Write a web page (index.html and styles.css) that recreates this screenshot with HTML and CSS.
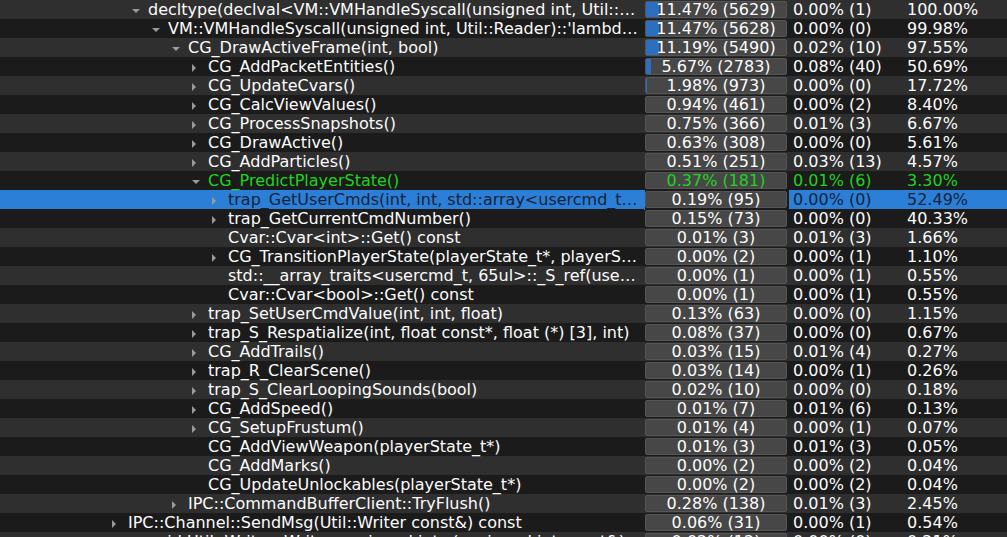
FILE: index.html
```html
<!DOCTYPE html>
<html>
<head>
<meta charset="utf-8">
<link rel="stylesheet" href="styles.css">
</head>
<body>
<div class="tree">
  <div class="row"><div class="name d1"><span class="arr down"></span>decltype(declval&lt;VM::VMHandleSyscall(unsigned int, Util::…</div><div class="barcol"><div class="bar" style="--w:14px">11.47% (5629)</div></div><div class="self">0.00% (1)</div><div class="incl">100.00%</div></div>
  <div class="row"><div class="name d2"><span class="arr down"></span>VM::VMHandleSyscall(unsigned int, Util::Reader)::'lambd…</div><div class="barcol"><div class="bar" style="--w:14px">11.47% (5628)</div></div><div class="self">0.00% (0)</div><div class="incl">99.98%</div></div>
  <div class="row"><div class="name d3"><span class="arr down"></span>CG_DrawActiveFrame(int, bool)</div><div class="barcol"><div class="bar" style="--w:14px">11.19% (5490)</div></div><div class="self">0.02% (10)</div><div class="incl">97.55%</div></div>
  <div class="row"><div class="name d4"><span class="arr right"></span>CG_AddPacketEntities()</div><div class="barcol"><div class="bar" style="--w:6px">5.67% (2783)</div></div><div class="self">0.08% (40)</div><div class="incl">50.69%</div></div>
  <div class="row"><div class="name d4"><span class="arr right"></span>CG_UpdateCvars()</div><div class="barcol"><div class="bar" style="--w:2px">1.98% (973)</div></div><div class="self">0.00% (0)</div><div class="incl">17.72%</div></div>
  <div class="row"><div class="name d4"><span class="arr right"></span>CG_CalcViewValues()</div><div class="barcol"><div class="bar" style="--w:1px">0.94% (461)</div></div><div class="self">0.00% (2)</div><div class="incl">8.40%</div></div>
  <div class="row"><div class="name d4"><span class="arr right"></span>CG_ProcessSnapshots()</div><div class="barcol"><div class="bar" style="--w:1px">0.75% (366)</div></div><div class="self">0.01% (3)</div><div class="incl">6.67%</div></div>
  <div class="row"><div class="name d4"><span class="arr right"></span>CG_DrawActive()</div><div class="barcol"><div class="bar" style="--w:1px">0.63% (308)</div></div><div class="self">0.00% (0)</div><div class="incl">5.61%</div></div>
  <div class="row"><div class="name d4"><span class="arr right"></span>CG_AddParticles()</div><div class="barcol"><div class="bar" style="--w:1px">0.51% (251)</div></div><div class="self">0.03% (13)</div><div class="incl">4.57%</div></div>
  <div class="row hot"><div class="name d4"><span class="arr down"></span>CG_PredictPlayerState()</div><div class="barcol"><div class="bar" style="--w:1px">0.37% (181)</div></div><div class="self">0.01% (6)</div><div class="incl">3.30%</div></div>
  <div class="row sel"><div class="name d5"><span class="arr right"></span>trap_GetUserCmds(int, int, std::array&lt;usercmd_t…</div><div class="barcol"><div class="bar" style="--w:1px">0.19% (95)</div></div><div class="self">0.00% (0)</div><div class="incl">52.49%</div></div>
  <div class="row"><div class="name d5"><span class="arr right"></span>trap_GetCurrentCmdNumber()</div><div class="barcol"><div class="bar" style="--w:1px">0.15% (73)</div></div><div class="self">0.00% (0)</div><div class="incl">40.33%</div></div>
  <div class="row"><div class="name d5"><span class="arr"></span>Cvar::Cvar&lt;int&gt;::Get() const</div><div class="barcol"><div class="bar" style="--w:1px">0.01% (3)</div></div><div class="self">0.01% (3)</div><div class="incl">1.66%</div></div>
  <div class="row"><div class="name d5"><span class="arr right"></span>CG_TransitionPlayerState(playerState_t*, playerS…</div><div class="barcol"><div class="bar" style="--w:1px">0.00% (2)</div></div><div class="self">0.00% (1)</div><div class="incl">1.10%</div></div>
  <div class="row"><div class="name d5"><span class="arr"></span>std::__array_traits&lt;usercmd_t, 65ul&gt;::_S_ref(use…</div><div class="barcol"><div class="bar" style="--w:1px">0.00% (1)</div></div><div class="self">0.00% (1)</div><div class="incl">0.55%</div></div>
  <div class="row"><div class="name d5"><span class="arr"></span>Cvar::Cvar&lt;bool&gt;::Get() const</div><div class="barcol"><div class="bar" style="--w:1px">0.00% (1)</div></div><div class="self">0.00% (1)</div><div class="incl">0.55%</div></div>
  <div class="row"><div class="name d4"><span class="arr right"></span>trap_SetUserCmdValue(int, int, float)</div><div class="barcol"><div class="bar" style="--w:1px">0.13% (63)</div></div><div class="self">0.00% (0)</div><div class="incl">1.15%</div></div>
  <div class="row"><div class="name d4"><span class="arr right"></span>trap_S_Respatialize(int, float const*, float (*) [3], int)</div><div class="barcol"><div class="bar" style="--w:1px">0.08% (37)</div></div><div class="self">0.00% (0)</div><div class="incl">0.67%</div></div>
  <div class="row"><div class="name d4"><span class="arr right"></span>CG_AddTrails()</div><div class="barcol"><div class="bar" style="--w:1px">0.03% (15)</div></div><div class="self">0.01% (4)</div><div class="incl">0.27%</div></div>
  <div class="row"><div class="name d4"><span class="arr right"></span>trap_R_ClearScene()</div><div class="barcol"><div class="bar" style="--w:1px">0.03% (14)</div></div><div class="self">0.00% (1)</div><div class="incl">0.26%</div></div>
  <div class="row"><div class="name d4"><span class="arr right"></span>trap_S_ClearLoopingSounds(bool)</div><div class="barcol"><div class="bar" style="--w:1px">0.02% (10)</div></div><div class="self">0.00% (0)</div><div class="incl">0.18%</div></div>
  <div class="row"><div class="name d4"><span class="arr right"></span>CG_AddSpeed()</div><div class="barcol"><div class="bar" style="--w:1px">0.01% (7)</div></div><div class="self">0.01% (6)</div><div class="incl">0.13%</div></div>
  <div class="row"><div class="name d4"><span class="arr right"></span>CG_SetupFrustum()</div><div class="barcol"><div class="bar" style="--w:1px">0.01% (4)</div></div><div class="self">0.00% (1)</div><div class="incl">0.07%</div></div>
  <div class="row"><div class="name d4"><span class="arr"></span>CG_AddViewWeapon(playerState_t*)</div><div class="barcol"><div class="bar" style="--w:1px">0.01% (3)</div></div><div class="self">0.01% (3)</div><div class="incl">0.05%</div></div>
  <div class="row"><div class="name d4"><span class="arr"></span>CG_AddMarks()</div><div class="barcol"><div class="bar" style="--w:1px">0.00% (2)</div></div><div class="self">0.00% (2)</div><div class="incl">0.04%</div></div>
  <div class="row"><div class="name d4"><span class="arr"></span>CG_UpdateUnlockables(playerState_t*)</div><div class="barcol"><div class="bar" style="--w:1px">0.00% (2)</div></div><div class="self">0.00% (2)</div><div class="incl">0.04%</div></div>
  <div class="row"><div class="name d3"><span class="arr right"></span>IPC::CommandBufferClient::TryFlush()</div><div class="barcol"><div class="bar" style="--w:1px">0.28% (138)</div></div><div class="self">0.01% (3)</div><div class="incl">2.45%</div></div>
  <div class="row"><div class="name d0"><span class="arr right"></span>IPC::Channel::SendMsg(Util::Writer const&amp;) const</div><div class="barcol"><div class="bar" style="--w:1px">0.06% (31)</div></div><div class="self">0.00% (1)</div><div class="incl">0.54%</div></div>
  <div class="row"><div class="name d1"><span class="arr"></span>void Util::Writer::Write&lt;unsigned int&gt;(unsigned int const&amp;)</div><div class="barcol"><div class="bar" style="--w:1px">0.02% (12)</div></div><div class="self">0.00% (0)</div><div class="incl">0.21%</div></div>
</div>
</body>
</html>
```
FILE: styles.css
```css
html, body {
  margin: 0;
  padding: 0;
  background: #1b1b1b;
  overflow: hidden;
}
.tree {
  font-family: "DejaVu Sans", sans-serif;
  font-size: 16px;
  color: #fcfcfc;
  width: 1007px;
}
.row {
  display: grid;
  grid-template-columns: 644px 145px 114px 1fr;
  height: 19px;
  line-height: 20px;
  background: #1b1b1b;
}
.row:nth-child(odd) {
  background: #2f2f2f;
}
.name {
  display: flex;
  align-items: center;
  white-space: nowrap;
  overflow: hidden;
}
.d0 { padding-left: 108px; }
.d1 { padding-left: 128px; }
.d2 { padding-left: 148px; }
.d3 { padding-left: 168px; }
.d4 { padding-left: 188px; }
.d5 { padding-left: 208px; }
.arr {
  flex: 0 0 20px;
  height: 19px;
  position: relative;
}
.arr.down::before {
  content: "";
  position: absolute;
  left: 4px;
  top: 8px;
  border-left: 4px solid transparent;
  border-right: 4px solid transparent;
  border-top: 4px solid #9a9a9a;
}
.arr.right::before {
  content: "";
  position: absolute;
  left: 4px;
  top: 6px;
  border-top: 4px solid transparent;
  border-bottom: 4px solid transparent;
  border-left: 4px solid #9a9a9a;
}
.barcol {
  padding: 1px 2px 1px 1px;
}
.bar {
  height: 17px;
  box-sizing: border-box;
  border: 1px solid #555555;
  border-radius: 2px;
  background-color: #474747;
  background-image: linear-gradient(#2a6fc0, #2a6fc0);
  background-repeat: no-repeat;
  background-size: var(--w) 100%;
  background-position: -1px 0;
  text-align: center;
  line-height: 16px;
  color: #fcfcfc;
}
.self {
  padding-left: 4px;
  white-space: nowrap;
}
.incl {
  padding-left: 4px;
  white-space: nowrap;
}
.hot .name, .hot .bar, .hot .self, .hot .incl {
  color: #1ed41e;
}
.row.sel {
  background: #2b7fd6;
}
.sel .name, .sel .self, .sel .incl {
  color: #16233a;
}
.sel .barcol {
  background: #1b1b1b;
  box-shadow: inset 1px 0 0 #2b7fd6;
}
```
